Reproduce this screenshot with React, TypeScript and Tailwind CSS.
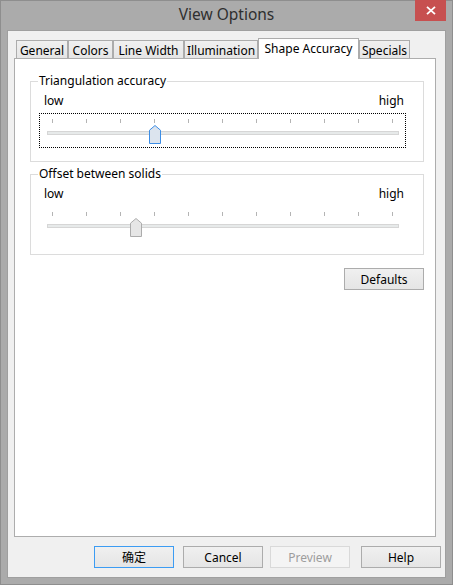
import React from "react";

const TICKS = Array.from({ length: 11 }, (_, i) => 12.5 + Math.round(i * 33.96));

function Thumb({ active }: { active: boolean }) {
  return (
    <svg width="12" height="19" viewBox="0 0 12 19" className="block">
      <path
        d="M0.5 18.5V5.2L6 0.5L11.5 5.2V18.5Z"
        fill={active ? "#dce4ee" : "#e6e6e6"}
        stroke={active ? "#3d8ee6" : "#acacac"}
      />
    </svg>
  );
}

function Slider({ focused, thumbLeft }: { focused: boolean; thumbLeft: number }) {
  return (
    <div
      className={
        focused
          ? "relative h-[35px] border border-dotted border-black"
          : "relative h-[35px] border border-transparent"
      }
    >
      <svg width="365" height="4" className="block mt-[5px]">
        {TICKS.map((x) => (
          <line key={x} x1={x} y1={0} x2={x} y2={4} stroke="#b4b4b4" strokeWidth="1" />
        ))}
      </svg>
      <div className="ml-[7px] mr-[6px] mt-[8px] h-[4px] bg-[#e7eaea] border border-[#d6d6d6]" />
      <div className="absolute top-[11px]" style={{ left: thumbLeft }}>
        <Thumb active={focused} />
      </div>
    </div>
  );
}

function Group({
  title,
  focused,
  thumbLeft,
  className,
}: {
  title: string;
  focused: boolean;
  thumbLeft: number;
  className?: string;
}) {
  return (
    <fieldset className={"border border-[#dcdcdc] pl-[8px] pr-[17px] pb-[13px] " + (className ?? "")}>
      <legend className="-ml-[1px] px-[1px] leading-[16px]">{title}</legend>
      <div className="mt-[4px] flex justify-between pl-[5px] pr-[2px] leading-[16px]">
        <span>low</span>
        <span>high</span>
      </div>
      <div className="mt-[4px]">
        <Slider focused={focused} thumbLeft={thumbLeft} />
      </div>
    </fieldset>
  );
}

const TABS: { label: string; w: string; selected?: boolean }[] = [
  { label: "General", w: "w-[52px]" },
  { label: "Colors", w: "w-[45px]" },
  { label: "Line Width", w: "w-[71px]" },
  { label: "Illumination", w: "w-[74px]" },
  { label: "Shape Accuracy", w: "w-[101px]", selected: true },
  { label: "Specials", w: "w-[51px]" },
];

function Btn({
  children,
  className,
  variant,
}: {
  children: React.ReactNode;
  className?: string;
  variant?: "default" | "disabled";
}) {
  const base = "w-[80px] h-[22px] border text-center leading-[21px] ";
  const v =
    variant === "default"
      ? "border-[#3c9cf3] bg-linear-to-b from-[#f0f0f0] to-[#e5e5e5] text-black"
      : variant === "disabled"
      ? "border-[#d9d9d9] bg-[#f4f4f4] text-[#9d9d9d]"
      : "border-[#acacac] bg-linear-to-b from-[#f0f0f0] to-[#e5e5e5] text-black";
  return <div className={base + v + " " + (className ?? "")}>{children}</div>;
}

export default function App() {
  return (
    <div className="w-[453px] h-[585px] bg-[#ababab] flex flex-col font-['Noto_Sans','Noto_Sans_CJK_SC',sans-serif] text-[12px] text-black shadow-[inset_0_0_0_1px_#8e8e8e] overflow-hidden">
      <div className="relative h-[31px] flex items-center justify-center">
        <span className="text-[15.5px] leading-none text-[#2f2f2f] -mt-[1px]">View Options</span>
        <div className="absolute right-[7px] top-0 w-[31px] h-[21px] bg-[#c75050] flex items-center justify-center">
          <svg width="10" height="9" viewBox="0 0 10 9">
            <path d="M1 0.8L9 8.2M9 0.8L1 8.2" stroke="#ffffff" strokeWidth="1.8" />
          </svg>
        </div>
      </div>
      <div className="mx-[8px] h-[546px] bg-[#f0f0f0] flex flex-col pt-[7px] shadow-[0_0_0_1px_#9f9f9f]">
        <div className="ml-[6px] w-[422px] flex flex-col">
          <div className="h-[20px] flex items-end pl-[2px]">
            {TABS.map((t) =>
              t.selected ? (
                <div
                  key={t.label}
                  className={
                    t.w +
                    " relative z-10 -mb-px h-[21px] bg-white border border-b-0 border-[#acacac] text-center leading-[16px] pt-[2px] whitespace-nowrap"
                  }
                >
                  {t.label}
                </div>
              ) : (
                <div
                  key={t.label}
                  className={
                    t.w +
                    " h-[18px] bg-linear-to-b from-[#f0f0f0] to-[#e5e5e5] border border-b-0 border-[#acacac] text-center leading-[16px] pt-[2px] whitespace-nowrap"
                  }
                >
                  {t.label}
                </div>
              )
            )}
          </div>
          <div className="h-[479px] border border-[#adadad] bg-white flex flex-col pl-[15px] pr-[11px] pt-[14px]">
            <Group title="Triangulation accuracy" focused={true} thumbLeft={109} />
            <Group title="Offset between solids" focused={false} thumbLeft={90} className="mt-[4px]" />
            <div className="mt-[13px] flex justify-end">
              <Btn>Defaults</Btn>
            </div>
          </div>
        </div>
        <div className="mt-[9px] flex">
          <Btn variant="default" className="ml-[86px]">
            确定
          </Btn>
          <Btn className="ml-[9px]">Cancel</Btn>
          <Btn variant="disabled" className="ml-[7px]">
            Preview
          </Btn>
          <Btn className="ml-[11px]">Help</Btn>
        </div>
      </div>
    </div>
  );
}
